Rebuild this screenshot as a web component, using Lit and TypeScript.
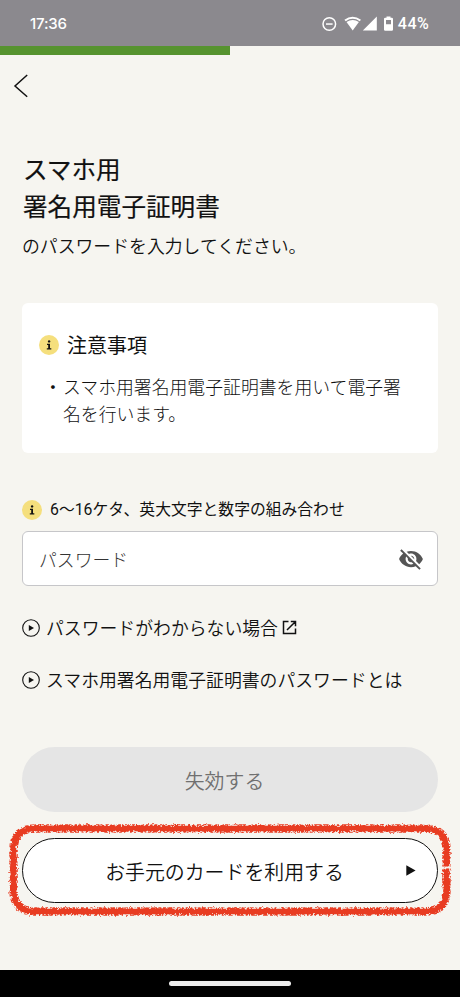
import { LitElement, html, css, svg } from "lit";
import { customElement } from "lit/decorators.js";

const infoIcon = html`<svg class="info" viewBox="0 0 20 20" width="20" height="20">
  <circle cx="10" cy="10" r="10" fill="#f5df7d" />
  <circle cx="10.1" cy="6.4" r="1.2" fill="#111" />
  <path d="M8 8.7h3v4.5h1.3v1.2H7.8v-1.2h1.4V9.9H8z" fill="#111" />
</svg>`;

const playIcon = html`<svg class="play" viewBox="0 0 18 18" width="18" height="18">
  <circle cx="9" cy="9" r="8.3" fill="none" stroke="#111" stroke-width="1.1" />
  <path d="M6.8 6L12 9l-5.2 3z" fill="#111" />
</svg>`;

const outline =
  "M442.5 47.5V31Q442.5 9.5 421 9.5H31Q9.5 9.5 9.5 31V71Q9.5 92.5 31 92.5H421Q442.5 92.5 442.5 71V49.5";

const markerStroke = (width: number, filter: string) =>
  svg`<g filter=${filter}><path d=${outline} fill="none" stroke="#e83c22" stroke-width=${width} /></g>`;

@customElement("app-root")
export class AppRoot extends LitElement {
  static styles = css`
    :host {
      display: flex;
      flex-direction: column;
      width: 460px;
      height: 997px;
      overflow: hidden;
      background: #f6f5f0;
      color: #111;
      font-family: "Noto Sans CJK JP", sans-serif;
      font-size: 17.85px;
      font-weight: 350;
    }
    * {
      box-sizing: border-box;
    }
    svg {
      display: block;
      flex: none;
    }
    .status {
      height: 46px;
      flex: none;
      display: flex;
      justify-content: space-between;
      align-items: center;
      padding: 1px 31px 0 30px;
      background: #8b898e;
      color: #fff;
      font: 500 16px/20px Roboto, sans-serif;
    }
    .time {
      font: 500 15px/20px Inter, sans-serif;
      letter-spacing: -0.2px;
    }
    .indicators {
      display: flex;
      align-items: center;
      letter-spacing: 0.6px;
    }
    .indicators span {
      margin-right: -0.5px;
    }
    .progress {
      height: 9px;
      flex: none;
    }
    .bar {
      width: 50%;
      height: 100%;
      background: #56932f;
    }
    .back {
      margin: 19px 0 0 13px;
    }
    main {
      flex: 1;
      display: flex;
      flex-direction: column;
      padding: 52px 22px 0;
    }
    h1 {
      margin: 0;
      padding-left: 1px;
      font-size: 24.6px;
      line-height: 37px;
      font-weight: 400;
      -webkit-text-stroke: 0.2px #111;
    }
    .lead {
      margin: 8px 0 0 0;
      line-height: 27px;
    }
    .card {
      height: 150px;
      margin-top: 44px;
      padding: 27px 17px 0;
      border-radius: 6px;
      background: #fff;
    }
    .heading {
      display: flex;
      align-items: center;
      gap: 8px;
      font-size: 20px;
      line-height: 30px;
      font-weight: 400;
    }
    .note {
      display: flex;
      margin: 13px 0 0 5px;
      line-height: 27px;
      color: #111;
      font-weight: 300;
    }
    .dot {
      width: 19px;
      flex: none;
      font-weight: 400;
    }
    .rule {
      display: flex;
      align-items: center;
      gap: 8px;
      height: 24px;
      margin-top: 45px;
      font-family: Roboto, "Noto Sans CJK JP", sans-serif;
      font-size: 15.8px;
      line-height: 24px;
      font-weight: 400;
    }
    .field {
      display: flex;
      align-items: center;
      justify-content: space-between;
      height: 55px;
      margin-top: 9px;
      padding: 0 13px 0 16px;
      border: 1px solid #c6c6c9;
      border-radius: 6px;
      background: #fff;
      color: #333;
      font-weight: 300;
    }
    .link {
      display: flex;
      align-items: center;
      height: 27px;
      gap: 6px;
      margin-top: 28px;
    }
    .link span {
      margin-top: -2px;
    }
    .link + .link {
      margin-top: 25px;
    }
    .external {
      margin-left: -2px;
    }
    .button {
      position: relative;
      display: flex;
      align-items: center;
      justify-content: center;
      height: 65px;
      border-radius: 33px;
      font-size: 19.9px;
      line-height: 30px;
      margin-top: 26px;
      padding: 3px 11px 0 0;
    }
    .disabled {
      margin-top: 54px;
      background: #e5e5e5;
      color: #707070;
    }
    .outlined {
      background: #fff;
      border: 1px solid #111;
    }
    .arrow {
      position: absolute;
      right: 21px;
      top: 26px;
    }
    .marker {
      position: absolute;
      left: -19px;
      top: -20px;
      pointer-events: none;
    }
    .nav {
      height: 27px;
      flex: none;
      display: flex;
      justify-content: center;
      padding-top: 11px;
      background: #000;
    }
    .handle {
      width: 122px;
      height: 5px;
      border-radius: 3px;
      background: #ececec;
    }
  `;

  render() {
    return html`
      <div class="status">
        <span class="time">17:36</span>
        <div class="indicators">
          <svg width="76" height="20" viewBox="320 13 76 20" fill="#fff">
            <circle cx="327.3" cy="23" r="6.3" fill="none" stroke="#fff" stroke-width="1.5" />
            <path d="M324 22.3h6.6v1.5H324z" />
            <path d="M342.4 18.7q8.1-6 16.6 0l-1.3 1.5q-7-4.9-14 0z" />
            <path d="M344.5 21q6.3-4 12.4 0l-6.2 8.4z" />
            <path d="M374.8 15.6v14h-14z" />
            <path fill-rule="evenodd" d="M384.5 15.4h4v1.4h1.3q1.2 0 1.2 1.2v10.6q0 1.2-1.2 1.2h-6.6q-1.2 0-1.2-1.2V18q0-1.2 1.2-1.2h1.3zM384 19v4.3h5V19z" />
          </svg>
          <span>44%</span>
        </div>
      </div>
      <div class="progress"><div class="bar"></div></div>
      <svg class="back" width="16" height="24" viewBox="13 74 16 24">
        <path d="M27.2 75L15 86l12.2 10.7" fill="none" stroke="#111" stroke-width="1.5" />
      </svg>
      <main>
        <h1>スマホ用<br />署名用電子証明書</h1>
        <div class="lead">のパスワードを入力してください。</div>
        <section class="card">
          <div class="heading">${infoIcon}<span>注意事項</span></div>
          <div class="note"><span class="dot">・</span><span>スマホ用署名用電子証明書を用いて電子署<br />名を行います。</span></div>
        </section>
        <div class="rule">${infoIcon}<span>6〜16ケタ、英大文字と数字の組み合わせ</span></div>
        <div class="field">
          <span>パスワード</span>
          <svg width="26" height="26" viewBox="0 0 24 24" fill="#555">
            <path d="M12 7c2.76 0 5 2.24 5 5 0 .65-.13 1.26-.36 1.83l2.92 2.92c1.51-1.26 2.7-2.89 3.43-4.75-1.73-4.39-6-7.5-11-7.5-1.4 0-2.74.25-3.98.7l2.16 2.16C10.74 7.13 11.35 7 12 7zM2 4.27l2.28 2.28.46.46C3.08 8.3 1.78 10.02 1 12c1.73 4.39 6 7.5 11 7.5 1.55 0 3.03-.3 4.38-.84l.42.42L19.73 22 21 20.73 3.27 3 2 4.27zM7.53 9.8l1.55 1.55c-.05.21-.08.43-.08.65 0 1.66 1.34 3 3 3 .22 0 .44-.03.65-.08l1.55 1.55c-.67.33-1.41.53-2.2.53-2.76 0-5-2.24-5-5 0-.79.2-1.53.53-2.2zm4.31-.78l3.15 3.15.02-.16c0-1.66-1.34-3-3-3l-.17.01z" />
          </svg>
        </div>
        <div class="link">
          ${playIcon}<span>パスワードがわからない場合</span>
          <svg class="external" width="15" height="15" viewBox="0 0 15 15" fill="none" stroke="#111" stroke-width="1.5">
            <path d="M6.5 1.5H1.5v12h12v-5M8.8 1.5h4.7v4.7M13.3 1.7L5 10" />
          </svg>
        </div>
        <div class="link">${playIcon}<span>スマホ用署名用電子証明書のパスワードとは</span></div>
        <div class="button disabled">失効する</div>
        <div class="button outlined">
          お手元のカードを利用する
          <svg class="arrow" width="10" height="11" viewBox="0 0 10 11"><path d="M.3.3L9.6 5.5.3 10.7z" fill="#111" /></svg>
          <svg class="marker" width="454" height="103" viewBox="0 0 454 103">
            <defs>
              <filter id="rough" x="0" y="0" width="454" height="103" filterUnits="userSpaceOnUse" color-interpolation-filters="sRGB">
                <feTurbulence type="fractalNoise" baseFrequency="0.3" numOctaves="2" seed="8" result="noise" />
                <feDisplacementMap in="SourceGraphic" in2="noise" scale="3" xChannelSelector="R" yChannelSelector="G" />
              </filter>
              <filter id="speckle" x="0" y="0" width="454" height="103" filterUnits="userSpaceOnUse" color-interpolation-filters="sRGB">
                <feTurbulence type="fractalNoise" baseFrequency="0.45" numOctaves="2" seed="3" result="noise" />
                <feColorMatrix in="noise" type="matrix" values="0 0 0 0 0  0 0 0 0 0  0 0 0 0 0  9 0 0 0 -3.9" result="grain" />
                <feDisplacementMap in="SourceGraphic" in2="noise" scale="2.5" xChannelSelector="G" yChannelSelector="B" result="edge" />
                <feComposite in="edge" in2="grain" operator="in" />
              </filter>
            </defs>
            ${markerStroke(5.5, "url(#rough)")} ${markerStroke(8.5, "url(#speckle)")}
          </svg>
        </div>
      </main>
      <div class="nav"><div class="handle"></div></div>
    `;
  }
}
